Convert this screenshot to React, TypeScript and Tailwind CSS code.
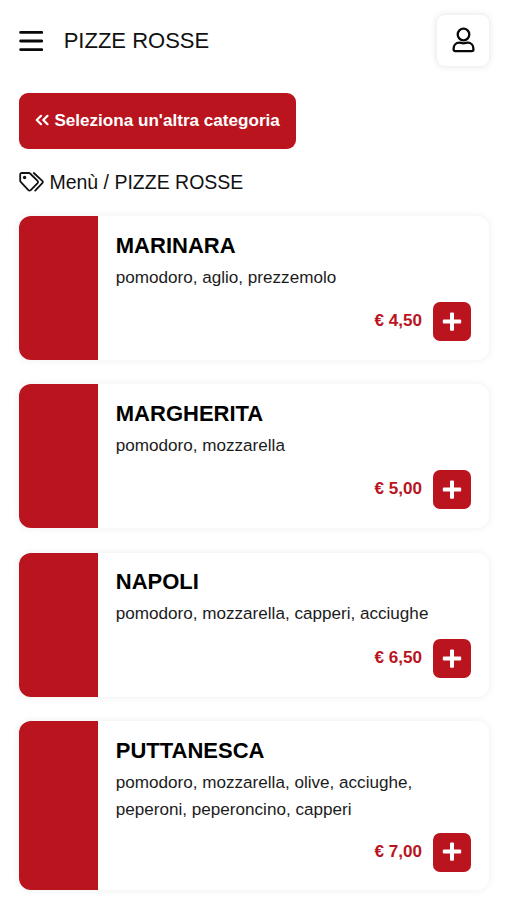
import React from "react";

type Pizza = { name: string; ingredients: string; price: string; size: string };

const pizzas: Pizza[] = [
  { name: "MARINARA", ingredients: "pomodoro, aglio, prezzemolo", price: "€ 4,50", size: "h-[143.5px]" },
  { name: "MARGHERITA", ingredients: "pomodoro, mozzarella", price: "€ 5,00", size: "h-[143.5px]" },
  { name: "NAPOLI", ingredients: "pomodoro, mozzarella, capperi, acciughe", price: "€ 6,50", size: "h-[144px]" },
  { name: "PUTTANESCA", ingredients: "pomodoro, mozzarella, olive, acciughe, peperoni, peperoncino, capperi", price: "€ 7,00", size: "h-[169px]" },
];

function MenuIcon() {
  return (
    <svg className="h-[22px] w-6" viewBox="0 0 24 22" stroke="#080808" strokeWidth="2.8" strokeLinecap="round">
      <path d="M1.6 2.4H22.8M1.6 11H22.8M1.6 19.6H22.8" />
    </svg>
  );
}

function UserIcon() {
  return (
    <svg className="mb-[2px] h-[26px] w-[23px]" viewBox="0 0 23 26" fill="none" stroke="#080808" strokeWidth="2.3" strokeLinejoin="round">
      <circle cx="11.5" cy="7.5" r="5.8" />
      <path d="M7.4 15.7c1.3 0 2.1.6 4.1.6s2.8-.6 4.1-.6c3.6 0 5.8 2.7 5.8 6v.8a1.6 1.6 0 0 1-1.6 1.6H3.2a1.6 1.6 0 0 1-1.6-1.6v-.8c0-3.3 2.2-6 5.8-6Z" />
    </svg>
  );
}

function TagsIcon() {
  return (
    <svg className="h-5 w-[25px]" viewBox="0 0 25 20" fill="none" stroke="#111" strokeWidth="1.8" strokeLinejoin="round" strokeLinecap="round">
      <path d="M1.2 2.6v6.1c0 .5.2.9.5 1.2l7.7 8.2c.7.7 1.6.7 2.3 0l6.9-6.9c.6-.7.6-1.6 0-2.3L11.1 1.5A1.6 1.6 0 0 0 9.9 1H2.8A1.6 1.6 0 0 0 1.2 2.6Z" />
      <path d="M14.8 1l8.5 7.9c.7.7.7 1.6 0 2.3L16.2 18.6" />
      <circle cx="5.6" cy="5.5" r="1.7" fill="#111" stroke="none" />
    </svg>
  );
}

function ChevronsIcon() {
  return (
    <svg className="-mt-px h-3 w-[14px]" viewBox="0 0 14 12" fill="none" stroke="white" strokeWidth="2.2" strokeLinecap="round" strokeLinejoin="round">
      <path d="M6 1.8L1.8 6L6 10.2M12.5 1.8L8.3 6L12.5 10.2" />
    </svg>
  );
}

function PlusIcon() {
  return (
    <svg className="h-5 w-5" viewBox="0 0 20 20" fill="white">
      <rect x="8" y="0.4" width="4" height="18.4" rx="1.1" />
      <rect x="0.8" y="7.6" width="18.4" height="4" rx="1.1" />
    </svg>
  );
}

function PizzaCard({ name, ingredients, price, size }: Pizza) {
  return (
    <article className={`flex overflow-hidden rounded-[12px] bg-white shadow-[0_0_8px_rgba(0,0,0,0.075)] ${size}`}>
      <div className="w-[78.4px] shrink-0 bg-[#ba151f]" />
      <div className="flex grow flex-col pt-[15.5px] pr-[18px] pb-[18.5px] pl-[18px]">
        <h2 className="text-[22px] leading-[27px] font-bold text-black">{name}</h2>
        <p className="mt-[6.3px] w-[325px] text-[17.1px] leading-[26.5px] text-[#1b1b1b]">{ingredients}</p>
        <div className="mt-auto flex items-center justify-end gap-[11px]">
          <span className="-mt-px text-[17.1px] leading-5 font-bold text-[#ba151f]">{price}</span>
          <button className="flex h-[39px] w-[38px] items-center justify-center rounded-[7px] bg-[#ba151f]">
            <PlusIcon />
          </button>
        </div>
      </div>
    </article>
  );
}

export default function App() {
  return (
    <div className="h-[900px] w-[507px] overflow-hidden bg-white pr-[18px] pl-[19.4px] font-['Liberation_Sans',Arial,sans-serif] text-[#111]">
      <header className="flex h-[81px] items-center">
        <MenuIcon />
        <h1 className="mt-px ml-[20.3px] text-[22px] leading-7">PIZZE ROSSE</h1>
        <button className="ml-auto flex h-[51px] w-[52px] items-center justify-center rounded-[8px] bg-white shadow-[0_0_7px_rgba(0,0,0,0.13)]">
          <UserIcon />
        </button>
      </header>
      <button className="mt-3 flex h-[55.5px] w-[276.6px] items-center rounded-[9px] bg-[#ba151f] pl-4 text-[17.1px] font-bold text-white">
        <ChevronsIcon />
        <span className="ml-[5px] whitespace-nowrap">Seleziona un'altra categoria</span>
      </button>
      <nav className="mt-[21px] flex h-6 items-center gap-[5px] text-[19.5px] leading-6">
        <TagsIcon />
        <span>Menù / PIZZE ROSSE</span>
      </nav>
      <main className="mt-[22.5px] flex flex-col gap-[24.8px]">
        {pizzas.map((pizza) => (
          <PizzaCard key={pizza.name} {...pizza} />
        ))}
      </main>
    </div>
  );
}
